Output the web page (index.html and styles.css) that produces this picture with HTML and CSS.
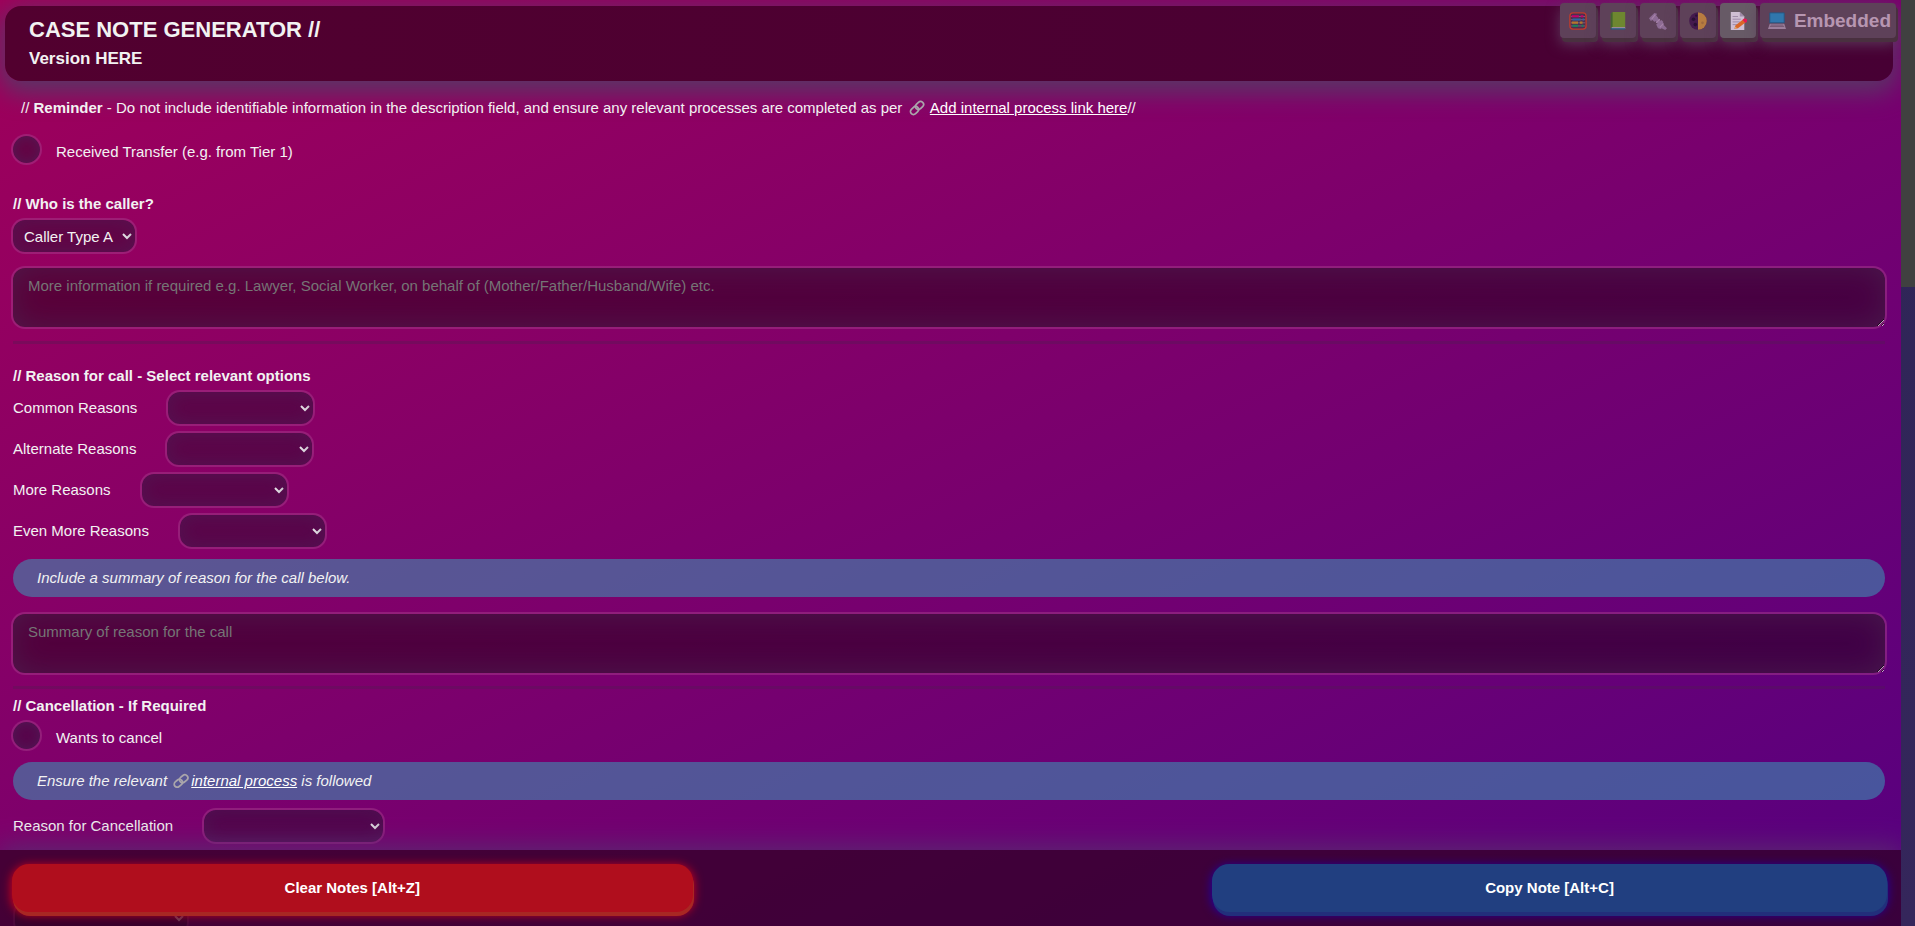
FILE: index.html
```html
<!DOCTYPE html>
<html lang="en">
<head>
<meta charset="utf-8">
<title>Case Note Generator</title>
<link rel="stylesheet" href="styles.css">
</head>
<body>
<div class="page">
  <header class="header">
    <h1 class="title">CASE NOTE GENERATOR //</h1>
    <p class="version">Version HERE</p>
  </header>
  <nav class="toolbar" aria-label="Tools">
    <button class="tool" type="button" aria-label="Calculator">
      <svg class="icon" viewBox="0 0 20 20"><rect x="1" y="1" width="18" height="18" rx="3.500" fill="#4a3050" stroke="#bf3b2c" stroke-width="1.500"/><path d="M2 5h16M2 8.500h16M2 12h16M2 15.500h16" stroke="#8d7084" stroke-width=".8"/><path d="M3 4.700h8M13 4.700h3" stroke="#c4006c" stroke-width="2.300"/><path d="M4 8.300h9M15 8.300h2" stroke="#2a66a6" stroke-width="2.300"/><path d="M3 11.800h7M12 11.800h3" stroke="#b5762c" stroke-width="2.300"/><path d="M4 15.300h6M14 15.300h2" stroke="#15855a" stroke-width="2.300"/></svg>
    </button>
    <button class="tool" type="button" aria-label="Guide">
      <svg class="icon" viewBox="0 0 20 20"><path d="M2 2l2-2h14v17H4l-2 1z" fill="#6e8730"/><path d="M2 2l2-2v17l-2 1z" fill="#426430"/><path d="M3 17h15v2H3z" fill="#b4a4b8"/><path d="M2 18h16v1.500H2z" fill="#24577c"/></svg>
    </button>
    <button class="tool" type="button" aria-label="Tools">
      <svg class="icon" viewBox="0 0 20 20"><path d="M6 6l9 9" stroke="#8d6b94" stroke-width="4.500"/><path d="M0 7l6-6 3 1-1 2 2 2-4 5-2-2-2 1z" fill="#8d6b94"/><path d="M8 14l6-5 2 2-1 2 5 5-2 2-4-2-1 1-3-1z" fill="#8d6b94"/><path d="M3 8l4-5M8 12l4-4M12 17l4-4" stroke="#a783aa" stroke-width="1.200"/></svg>
    </button>
    <button class="tool" type="button" aria-label="Contrast">
      <svg class="icon" viewBox="0 0 20 20"><circle cx="10" cy="10" r="9.800" fill="#44194d"/><path d="M10 .2a9.800 9.800 0 0 1 0 19.600z" fill="#b77c40"/><circle cx="5" cy="8" r="2" fill="#291034"/><circle cx="7" cy="14" r="2" fill="#291034"/><circle cx="8" cy="4" r="1.300" fill="#291034"/><circle cx="15" cy="12" r="1.500" fill="#9f693e"/></svg>
    </button>
    <button class="tool tool-active" type="button" aria-label="Notes">
      <svg class="icon" viewBox="0 0 20 20"><path d="M2 0h10l5 5v15H2z" fill="#cfbed4"/><path d="M12 0v5h5z" fill="#9f8ba8"/><path d="M4 5h6M4 8h9M4 11h8M4 14h5" stroke="#9b86a5"/><path d="M6 19l1-4 9-7 3 3-9 7z" fill="#da6728"/><path d="M15 9l2-2 3 1v3l-2 1z" fill="#e31b54"/><path d="M6 19l1-3 2 2z" fill="#d8aa78"/></svg>
    </button>
    <button class="tool tool-wide" type="button">
      <svg class="icon" viewBox="0 0 20 20"><path d="M2 1h16v11H2z" fill="#3077ad" stroke="#245783"/><path d="M2 13h16l2 6H0z" fill="#9c7f9c"/><path d="M3 14.500h14M2 16h16" stroke="#6e526c"/></svg>
      Embedded
    </button>
  </nav>

  <main class="content">
    <p class="reminder">// <strong>Reminder</strong> - Do not include identifiable information in the description field, and ensure any relevant processes are completed as per
      <svg class="link-icon" viewBox="0 0 16 16"><g fill="none" stroke="#aaa6ab" stroke-width="1.700" transform="rotate(-45 8 8)"><rect x="0" y="5" width="9" height="6" rx="3"/><rect x="7" y="5" width="9" height="6" rx="3"/></g></svg>
      <a href="#process">Add internal process link here</a>//</p>

    <div class="check-row">
      <input class="check" type="checkbox" id="transfer">
      <label for="transfer">Received Transfer (e.g. from Tier 1)</label>
    </div>

    <section class="section">
      <h2 class="heading"><label for="caller">// Who is the caller?</label></h2>
      <select class="select select-caller" id="caller"><option>Caller Type A</option></select>
      <textarea class="note" aria-label="Caller information" placeholder="More information if required e.g. Lawyer, Social Worker, on behalf of (Mother/Father/Husband/Wife) etc."></textarea>
    </section>
    <hr class="rule">

    <section class="section">
      <h2 class="heading">// Reason for call - Select relevant options</h2>
      <div class="field"><label for="common">Common Reasons</label><select class="select" id="common"><option></option></select></div>
      <div class="field"><label for="alternate">Alternate Reasons</label><select class="select" id="alternate"><option></option></select></div>
      <div class="field"><label for="more">More Reasons</label><select class="select" id="more"><option></option></select></div>
      <div class="field"><label for="even">Even More Reasons</label><select class="select" id="even"><option></option></select></div>
      <p class="hint">Include a summary of reason for the call below.</p>
      <textarea class="note" aria-label="Summary" placeholder="Summary of reason for the call"></textarea>
    </section>
    <hr class="rule rule-tight">

    <section class="section">
      <h2 class="heading">// Cancellation - If Required</h2>
      <div class="check-row check-row-tight">
        <input class="check" type="checkbox" id="cancel">
        <label for="cancel">Wants to cancel</label>
      </div>
      <p class="hint hint-tight">Ensure the relevant
        <svg class="link-icon" viewBox="0 0 16 16"><g fill="none" stroke="#aaa6ab" stroke-width="1.700" transform="rotate(-40 8 8)"><rect x="0" y="5" width="9" height="6" rx="3"/><rect x="7" y="5" width="9" height="6" rx="3"/></g></svg><a href="#cancel-process">internal process</a> is followed</p>
      <div class="field"><label for="reason">Reason for Cancellation</label><select class="select select-wide" id="reason"><option></option></select></div>
    </section>
    <section class="section section-next">
      <select class="select select-next" aria-label="Outcome"><option></option></select>
    </section>
  </main>

  <footer class="actions">
    <button class="action action-clear" type="button">Clear Notes [Alt+Z]</button>
    <button class="action action-copy" type="button">Copy Note [Alt+C]</button>
  </footer>
</div>
<div class="scrollbar"><div class="thumb"></div></div>
</body>
</html>
```
FILE: styles.css
```css
* { box-sizing: border-box; }

body {
  margin: 0;
  height: 100vh;
  display: grid;
  grid-template-columns: 1fr 14px;
  overflow: hidden;
  color: #f2f2f2;
  font: 15px/20px "Liberation Sans", Arial, sans-serif;
}

button, select, textarea { font: inherit; color: inherit; }
h1, h2, p { margin: 0; }
a { color: #fff; }

.page {
  position: relative;
  height: 100vh;
  overflow: hidden;
  background: linear-gradient(to bottom right, #a0005a, #560080);
}

.header {
  margin: 6px 8px 0 5px;
  padding: 12px 24px;
  height: 75px;
  border-radius: 16px;
  background: linear-gradient(to right, #52002f, #470034);
  box-shadow: 0 8px 24px 4px #5a3566;
}
.title { font-size: 22px; line-height: 24px; }
.version { margin-top: 7px; font-size: 17px; line-height: 20px; font-weight: bold; }

.toolbar {
  position: absolute;
  top: 3px;
  right: 5px;
  display: flex;
  gap: 4px;
}
.tool {
  display: flex;
  align-items: center;
  gap: 8px;
  height: 35px;
  padding: 0 9px;
  border: 0;
  border-radius: 4px;
  background: #5e4159;
  box-shadow: 2px 4px 0 #49303f, 0 6px 14px #5c3a5c;
}
.tool-active { background: #675a66; }
.tool-wide { padding: 0 5px 0 8px; font-size: 19px; font-weight: bold; color: #b796b1; }
.icon { width: 18px; height: 18px; }

.content { padding: 16px 16px 0 13px; }
.reminder { padding: 0 8px; line-height: 22px; }
.link-icon { width: 16px; height: 16px; margin: 0 2px; vertical-align: -3px; }

.check-row {
  display: flex;
  align-items: center;
  gap: 14px;
  height: 31px;
  margin-top: 15px;
}
.check {
  appearance: none;
  flex: none;
  width: 31px;
  height: 31px;
  margin: 0 0 0 -2px;
  border: 2px solid rgba(165, 60, 140, .5);
  border-radius: 50%;
  background: rgba(45, 10, 45, .5) padding-box;
  box-shadow: inset 0 0 12px rgba(75, 35, 90, .7);
}
.check-row label { padding-top: 4px; }

.section { display: flow-root; }
.heading { margin-bottom: 4px; font-size: 15px; line-height: 20px; }
.check-row + .section { margin-top: 29px; }

.select {
  display: block;
  width: 149px;
  height: 36px;
  padding: 0 0 0 7px;
  border: 2px solid rgba(165, 60, 140, .5);
  border-radius: 14px;
  background: rgba(45, 10, 45, .5) padding-box;
  box-shadow: inset 0 0 18px rgba(75, 35, 90, .5);
}
.select-caller { width: 126px; margin-left: -2px; }
.select-wide { width: 183px; }
.select-next { width: 176px; }
.select option { color: #f2f2f2; background: #3d0c3d; }

.note {
  display: block;
  width: calc(100% + 4px);
  height: 63px;
  margin: 12px -2px 0;
  padding: 8px 15px;
  border: 2px solid rgba(165, 60, 140, .5);
  border-radius: 14px;
  background: rgba(32, 0, 20, .5) padding-box;
  box-shadow: inset 0 0 30px rgba(75, 35, 80, .7);
  resize: vertical;
}
.note::placeholder { color: #757575; }

.rule { height: 3px; margin: 12px 0 22px; border: 0; background: rgba(80, 30, 80, .35); }
.rule-tight { margin: 11px 0 7px; }

.field { display: flex; align-items: center; gap: 29px; margin-bottom: 5px; }

.hint {
  margin: 10px 0 0;
  padding: 9px 24px;
  border-radius: 19px;
  background: rgba(57, 152, 182, .56);
  font-style: italic;
}
.hint-tight { margin: 11px 0 8px; }
.hint + .note { margin-top: 15px; }
.check-row-tight { margin-top: 0; }
.section-next { padding-top: 51px; }

.actions {
  position: absolute;
  right: 0;
  bottom: 0;
  left: 0;
  display: flex;
  justify-content: space-between;
  padding: 14px 14px 14px 12px;
  background: rgba(46, 0, 32, .7);
  box-shadow: 0 -4px 24px #5b2870;
}
.action {
  width: 36%;
  height: 48px;
  border: 0;
  border-radius: 17px;
  color: #fff;
  font-weight: bold;
}
.action-clear {
  width: 36.3%;
  background: #b00e1d;
  box-shadow: 1px 4px 0 #a82723, 0 2px 10px 1px #d0001c;
}
.action-copy {
  background: #213f80;
  box-shadow: 1px 4px 0 #222f7b, 0 2px 10px 1px #2200a0;
}

.scrollbar { background: linear-gradient(#2d2556, #35265b); }
.thumb { height: 31vh; background: #404040; }
```
